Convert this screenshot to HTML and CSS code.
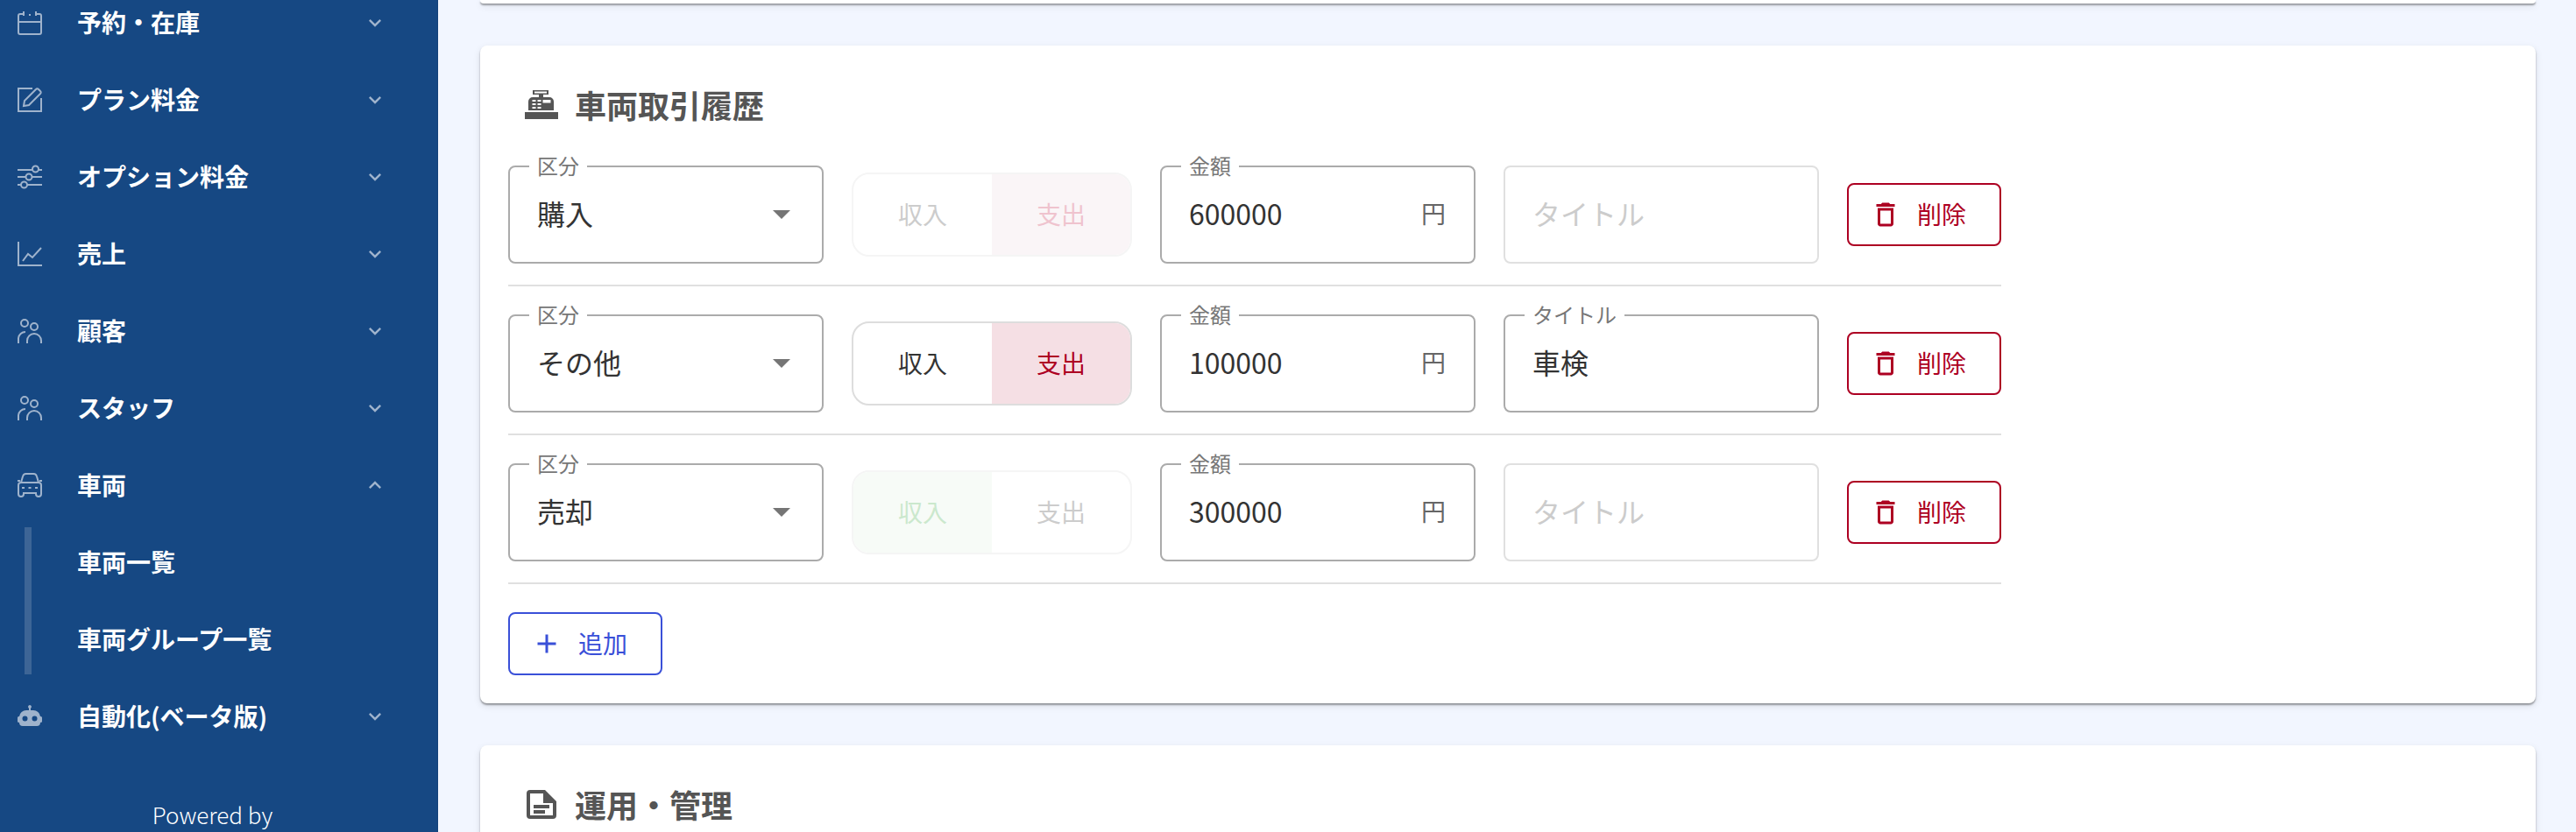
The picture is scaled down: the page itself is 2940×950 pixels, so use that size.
FILE: index.html
```html
<!DOCTYPE html>
<html lang="ja">
<head>
    <meta charset="utf-8">
    <title>車両取引履歴</title>
    <link rel="stylesheet" href="styles.css">
</head>
<body>
    <nav class="sidebar">
        <ul class="nav-list">
            <li class="nav-item">
                <svg class="nav-icon" viewBox="0 0 28 28"><path d="M7 4H3a2 2 0 0 0-2 2v19a2 2 0 0 0 2 2h22a2 2 0 0 0 2-2V6a2 2 0 0 0-2-2h-4M1 13h26M7 1v5M21 1v5M14 4v2"/></svg>
                <span class="nav-text">予約・在庫</span>
                <svg class="chevron" viewBox="0 0 24 24"><path d="M16.59 8.59 12 13.17 7.41 8.59 6 10l6 6 6-6z"/></svg>
            </li>
            <li class="nav-item">
                <svg class="nav-icon" viewBox="0 0 28 28"><path d="M17 1H1v26h26V12"/><path d="M7 21l1-6L21 2a2 2 0 0 1 3 0l2 2a2 2 0 0 1 0 3L13 20z"/></svg>
                <span class="nav-text">プラン料金</span>
                <svg class="chevron" viewBox="0 0 24 24"><path d="M16.59 8.59 12 13.17 7.41 8.59 6 10l6 6 6-6z"/></svg>
            </li>
            <li class="nav-item">
                <svg class="nav-icon" viewBox="0 0 28 28"><path d="M0 6h17M24 6h4M0 14h9M16 14h12M0 23h4M11 23h17"/><circle cx="20.500" cy="5" r="3.500"/><circle cx="13" cy="14" r="3.500"/><circle cx="7.500" cy="23" r="3.500"/></svg>
                <span class="nav-text">オプション料金</span>
                <svg class="chevron" viewBox="0 0 24 24"><path d="M16.59 8.59 12 13.17 7.41 8.59 6 10l6 6 6-6z"/></svg>
            </li>
            <li class="nav-item">
                <svg class="nav-icon" viewBox="0 0 28 28"><path d="M1 0v27h27M6 22l6-8 5 4 10-11"/></svg>
                <span class="nav-text">売上</span>
                <svg class="chevron" viewBox="0 0 24 24"><path d="M16.59 8.59 12 13.17 7.41 8.59 6 10l6 6 6-6z"/></svg>
            </li>
            <li class="nav-item">
                <svg class="nav-icon" viewBox="0 0 28 28"><circle cx="8" cy="5" r="4"/><circle cx="19" cy="9" r="4"/><path d="M1 28v-6a8 8 0 0 1 8-7M11 28v-3a8 8 0 0 1 16 0v3"/></svg>
                <span class="nav-text">顧客</span>
                <svg class="chevron" viewBox="0 0 24 24"><path d="M16.59 8.59 12 13.17 7.41 8.59 6 10l6 6 6-6z"/></svg>
            </li>
            <li class="nav-item">
                <svg class="nav-icon" viewBox="0 0 28 28"><circle cx="8" cy="5" r="4"/><circle cx="19" cy="9" r="4"/><path d="M1 28v-6a8 8 0 0 1 8-7M11 28v-3a8 8 0 0 1 16 0v3"/></svg>
                <span class="nav-text">スタッフ</span>
                <svg class="chevron" viewBox="0 0 24 24"><path d="M16.59 8.59 12 13.17 7.41 8.59 6 10l6 6 6-6z"/></svg>
            </li>
            <li class="nav-item">
                <svg class="nav-icon" viewBox="0 0 28 28"><path d="M4 11l2-7a4 4 0 0 1 4-3h8a4 4 0 0 1 4 3l2 7M4 11h20a3 3 0 0 1 3 3v10a3 3 0 0 1-6 0v-1H7v1a3 3 0 0 1-6 0V14a3 3 0 0 1 3-3zM0 9h3M25 9h3M5 17h3M12.500 17h3M20 17h3"/></svg>
                <span class="nav-text">車両</span>
                <svg class="chevron open" viewBox="0 0 24 24"><path d="M16.59 8.59 12 13.17 7.41 8.59 6 10l6 6 6-6z"/></svg>
            </li>
            <li>
                <ul class="sub-list">
                    <li class="nav-item"><span class="nav-text">車両一覧</span></li>
                    <li class="nav-item"><span class="nav-text">車両グループ一覧</span></li>
                </ul>
            </li>
            <li class="nav-item">
                <svg class="nav-icon" viewBox="0 0 28 28"><path class="solid" fill-rule="evenodd" d="M14 1a2 2 0 0 1 1 3.700V7h3a8 8 0 0 1 8 7h.500a1.500 1.500 0 0 1 1.500 1.500v4a1.500 1.500 0 0 1-1.500 1.500H26a4 4 0 0 1-4 4H6a4 4 0 0 1-4-4h-.500A1.500 1.500 0 0 1 0 19.500v-4A1.500 1.500 0 0 1 1.500 14H2a8 8 0 0 1 8-7h3V4.700A2 2 0 0 1 14 1zM8.500 13.500a3 3 0 1 0 0 6 3 3 0 0 0 0-6zm11 0a3 3 0 1 0 0 6 3 3 0 0 0 0-6z"/></svg>
                <span class="nav-text">自動化(ベータ版)</span>
                <svg class="chevron" viewBox="0 0 24 24"><path d="M16.59 8.59 12 13.17 7.41 8.59 6 10l6 6 6-6z"/></svg>
            </li>
        </ul>
        <p class="powered">Powered by</p>
    </nav>

    <main class="content">
        <div class="card card-stub"></div>

        <section class="card">
            <h2 class="card-title">
                <svg class="title-icon" viewBox="0 0 44 44"><path fill-rule="evenodd" d="M14 5h18v5h-6v3h7a5 5 0 0 1 5 5v10H9V18a5 5 0 0 1 5-5h7v-3h-7zm2 1.500v2h14v-2zM13.500 16v2h4v-2zm6 0v2h4v-2zm6 0v3.500h9V16zM13.500 20v2h4v-2zm6 0v2h4v-2zM13.500 24v2h4v-2zm6 0v2h4v-2z"/><path d="M5 30h38v8H5z"/></svg>
                車両取引履歴
            </h2>

            <div class="deal-row">
                <div class="field field-select">
                    <span class="field-label">区分</span>
                    <span class="field-value">購入</span>
                    <span class="select-arrow"></span>
                </div>
                <div class="toggle disabled">
                    <span class="toggle-btn">収入</span>
                    <span class="toggle-btn expense on">支出</span>
                </div>
                <div class="field">
                    <span class="field-label">金額</span>
                    <span class="field-value">600000</span>
                    <span class="field-unit">円</span>
                </div>
                <div class="field field-off">
                    <span class="field-placeholder">タイトル</span>
                </div>
                <button class="btn btn-delete">
                    <svg class="btn-icon" viewBox="0 0 24 24"><path d="M6 19c0 1.100.9 2 2 2h8c1.100 0 2-.9 2-2V7H6v12zM8 9h8v10H8V9zm7.500-5l-1-1h-5l-1 1H5v2h14V4z"/></svg>
                    削除
                </button>
            </div>

            <div class="deal-row">
                <div class="field field-select">
                    <span class="field-label">区分</span>
                    <span class="field-value">その他</span>
                    <span class="select-arrow"></span>
                </div>
                <div class="toggle">
                    <span class="toggle-btn">収入</span>
                    <span class="toggle-btn expense on">支出</span>
                </div>
                <div class="field">
                    <span class="field-label">金額</span>
                    <span class="field-value">100000</span>
                    <span class="field-unit">円</span>
                </div>
                <div class="field">
                    <span class="field-label">タイトル</span>
                    <span class="field-value">車検</span>
                </div>
                <button class="btn btn-delete">
                    <svg class="btn-icon" viewBox="0 0 24 24"><path d="M6 19c0 1.100.9 2 2 2h8c1.100 0 2-.9 2-2V7H6v12zM8 9h8v10H8V9zm7.500-5l-1-1h-5l-1 1H5v2h14V4z"/></svg>
                    削除
                </button>
            </div>

            <div class="deal-row">
                <div class="field field-select">
                    <span class="field-label">区分</span>
                    <span class="field-value">売却</span>
                    <span class="select-arrow"></span>
                </div>
                <div class="toggle disabled">
                    <span class="toggle-btn income on">収入</span>
                    <span class="toggle-btn">支出</span>
                </div>
                <div class="field">
                    <span class="field-label">金額</span>
                    <span class="field-value">300000</span>
                    <span class="field-unit">円</span>
                </div>
                <div class="field field-off">
                    <span class="field-placeholder">タイトル</span>
                </div>
                <button class="btn btn-delete">
                    <svg class="btn-icon" viewBox="0 0 24 24"><path d="M6 19c0 1.100.9 2 2 2h8c1.100 0 2-.9 2-2V7H6v12zM8 9h8v10H8V9zm7.500-5l-1-1h-5l-1 1H5v2h14V4z"/></svg>
                    削除
                </button>
            </div>

            <button class="btn btn-add">
                <svg class="btn-icon" viewBox="0 0 24 24"><path d="M19 13h-6v6h-2v-6H5v-2h6V5h2v6h6v2z"/></svg>
                追加
            </button>
        </section>

        <section class="card">
            <h2 class="card-title">
                <svg class="title-icon" viewBox="0 0 44 44"><path fill-rule="evenodd" d="M11 5h17l13 13v16a4 4 0 0 1-4 4H11a4 4 0 0 1-4-4V9a4 4 0 0 1 4-4zm0 4v25h26V20H26V9zm4 13h18v4H15zm0 6h13v4H15z"/></svg>
                運用・管理
            </h2>
        </section>
    </main>
</body>
</html>
```

FILE: styles.css
```css
* {
    box-sizing: border-box;
}
html, body {
    height: 950px;
    margin: 0;
    overflow: hidden;
}
body {
    display: flex;
    font-family: "Noto Sans CJK JP", "Noto Sans", sans-serif;
    background-color: #f2f6ff;
    color: #333;
}

/* Sidebar */
.sidebar {
    width: 500px;
    flex-shrink: 0;
    background-color: #164883;
    border-right: 1px solid #14427a;
    color: #fff;
}
.nav-list,
.sub-list {
    list-style: none;
    margin: 0;
    padding: 0;
}
.nav-list {
    margin-top: -18px;
}
.sub-list {
    position: relative;
    padding-left: 0;
}
.sub-list::before {
    content: "";
    position: absolute;
    left: 28px;
    top: 4px;
    bottom: 4px;
    width: 8px;
    background-color: #3d6596;
}
.nav-item {
    display: flex;
    align-items: center;
    height: 88px;
    padding: 0 57px 0 20px;
}
.sub-list .nav-item {
    padding-left: 88px;
}
.nav-icon {
    width: 28px;
    height: 28px;
    margin-right: 40px;
    flex-shrink: 0;
    fill: none;
    stroke: #9fb3cc;
    stroke-width: 2;
}
.nav-icon .solid {
    fill: #9fb3cc;
    stroke: none;
}
.nav-text {
    flex: 1;
    padding-bottom: 3px;
    font-size: 28px;
    font-weight: 700;
    white-space: nowrap;
}
.chevron {
    width: 28px;
    height: 28px;
    flex-shrink: 0;
    fill: #9fb3cc;
}
.chevron.open {
    transform: rotate(180deg);
}
.powered {
    margin: 50px 14px 0 0;
    font-size: 26px;
    font-weight: 300;
    line-height: 36px;
    text-align: center;
}

/* Main area */
.content {
    flex: 1;
    display: flex;
    flex-direction: column;
    gap: 48px;
    padding: 0 46px 0 48px;
}
.card {
    flex-shrink: 0;
    background-color: #fff;
    border-radius: 8px;
    padding: 32px;
    box-shadow: 0 2px 2px rgba(0,0,0,0.35), 0 3px 8px rgba(0,0,0,0.1);
}
.card-stub {
    height: 4px;
    padding: 0;
    border-radius: 0 0 8px 8px;
}
.card-title {
    display: flex;
    align-items: center;
    gap: 18px;
    height: 72px;
    margin: 0 0 33px;
    padding-left: 14px;
    padding-bottom: 3px;
    font-size: 36px;
    font-weight: 700;
    line-height: 66px;
    color: #555;
}
.title-icon {
    width: 44px;
    height: 44px;
    margin-top: 3px;
    fill: #555;
}

/* Rows */
.deal-row {
    display: flex;
    align-items: center;
    gap: 32px;
    width: 1704px;
    padding-bottom: 24px;
    margin-bottom: 32px;
    border-bottom: 2px solid #e0e0e0;
}
.field {
    position: relative;
    display: flex;
    align-items: center;
    width: 360px;
    height: 112px;
    padding: 0 32px 5px 31px;
    border: 2px solid #ababab;
    border-radius: 8px;
}
.field-select {
    padding-right: 36px;
}
.field-off {
    border-color: #e0e0e0;
}
.field-label {
    position: absolute;
    left: 22px;
    top: -18px;
    padding: 0 9px;
    background-color: #fff;
    font-size: 24px;
    line-height: 32px;
    color: #777;
}
.field-value {
    flex: 1;
    font-size: 32px;
    color: #333;
}
.field-placeholder {
    font-size: 32px;
    color: #ccc;
}
.field-unit {
    font-size: 28px;
    color: #666;
}
.select-arrow {
    width: 0;
    height: 0;
    margin-top: 5px;
    border-left: 10px solid transparent;
    border-right: 10px solid transparent;
    border-top: 10px solid #757575;
}

/* Income / expense toggle */
.toggle {
    display: flex;
    width: 320px;
    height: 96px;
    border: 2px solid #ddd;
    border-radius: 20px;
    overflow: hidden;
    font-size: 28px;
    color: #333;
}
.toggle-btn {
    flex: 1;
    display: flex;
    align-items: center;
    justify-content: center;
    padding-bottom: 3px;
}
.toggle-btn.expense.on {
    background-color: #f5dfe4;
    color: #ad0022;
}
.toggle.disabled {
    border-color: #f5f5f5;
    color: #ccc;
}
.toggle.disabled .expense.on {
    background-color: #faf5f7;
    color: #efc3ce;
}
.toggle.disabled .income.on {
    background-color: #f7fbf7;
    color: #cbe8cd;
}

/* Buttons */
.btn {
    display: flex;
    align-items: center;
    gap: 18px;
    width: 176px;
    height: 72px;
    padding: 0 0 3px 24px;
    background-color: #fff;
    border: 2px solid;
    border-radius: 8px;
    font-family: inherit;
    font-size: 28px;
}
.btn-icon {
    width: 36px;
    height: 36px;
    margin-top: 3px;
    fill: currentColor;
}
.btn-delete {
    color: #ad0022;
}
.btn-add {
    color: #3a50d8;
}
```
